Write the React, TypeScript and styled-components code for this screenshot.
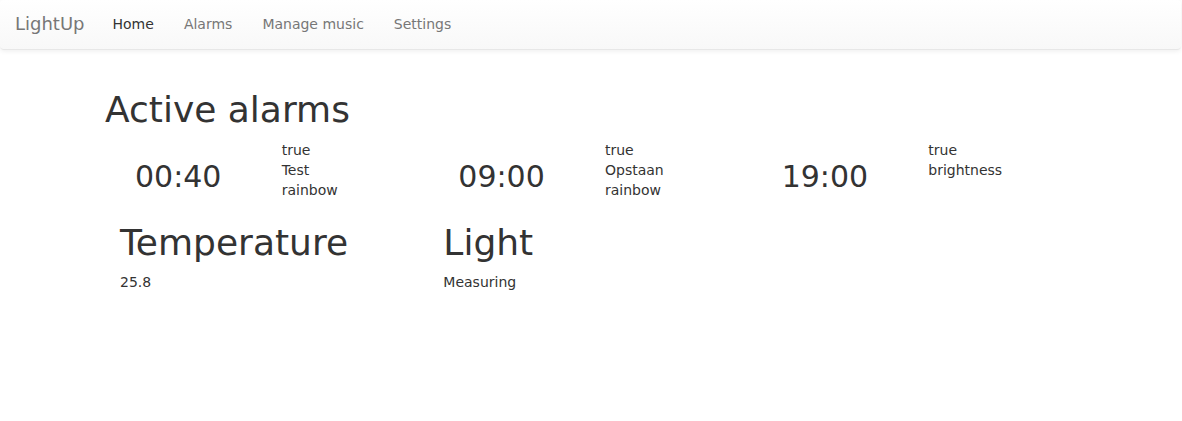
import React from "react";
import styled, { createGlobalStyle } from "styled-components";

const Global = createGlobalStyle`
  * { box-sizing: border-box; }
  html, body { margin: 0; padding: 0; background: #fff; }
  body {
    font-family: "DejaVu Sans", "Liberation Sans", sans-serif;
    font-size: 14px;
    line-height: 1.42857143;
    color: #333;
  }
`;

const Navbar = styled.nav`
  display: flex;
  align-items: stretch;
  height: 50px;
  margin: 0 1px 20px 0;
  background-image: linear-gradient(to bottom, #fff 0, #f8f8f8 100%);
  border: 1px solid #e7e7e7;
  border-width: 0 0 1px 0;
  border-radius: 4px;
  box-shadow: inset 0 1px 0 rgba(255, 255, 255, 0.15), 0 1px 5px rgba(0, 0, 0, 0.075);
`;

const Brand = styled.a`
  display: block;
  padding: 14px 13px 0 15px;
  font-size: 18px;
  line-height: 20px;
  color: #777;
  text-decoration: none;
  text-shadow: 0 1px 0 rgba(255, 255, 255, 0.25);
`;

const NavList = styled.ul`
  display: flex;
  list-style: none;
  margin: 0;
  padding: 0;
`;

const NavLink = styled.a<{ $active?: boolean }>`
  display: block;
  padding: 14px 15px 0 15px;
  line-height: 20px;
  color: ${(p) => (p.$active ? "#333" : "#777")};
  text-decoration: none;
`;

const Container = styled.div`
  display: flow-root;
  width: 972px;
  margin: 0 auto;
  padding: 0 17px 0 15px;
`;

const Row = styled.div`
  display: flex;
  flex-wrap: wrap;
  margin: 0 -15px;
`;

const Col = styled.div<{ $span: number }>`
  width: ${(p) => (p.$span / 12) * 100}%;
  padding: 0 15px;
`;

const H1 = styled.h1`
  font-size: 36px;
  font-weight: 500;
  line-height: 1.1;
  margin: 20px 0 10px;
`;

const PageTitle = styled(H1)`
  margin-left: -15px;
`;

const Time = styled.h2`
  font-size: 30px;
  font-weight: 500;
  line-height: 1.1;
  margin: 20px 0 10px;
  padding-left: 15px;
`;

const Lines = styled.div`
  display: flex;
  flex-direction: column;
`;

const P = styled.p`
  margin: 0 0 10px;
`;

const alarms = [
  { time: "00:40", lines: ["true", "Test", "rainbow"] },
  { time: "09:00", lines: ["true", "Opstaan", "rainbow"] },
  { time: "19:00", lines: ["true", "brightness"] },
];

export default function App() {
  return (
    <>
      <Global />
      <Navbar>
        <Brand href="#">LightUp</Brand>
        <NavList>
          <li><NavLink href="#" $active>Home</NavLink></li>
          <li><NavLink href="#">Alarms</NavLink></li>
          <li><NavLink href="#">Manage music</NavLink></li>
          <li><NavLink href="#">Settings</NavLink></li>
        </NavList>
      </Navbar>
      <Container>
        <PageTitle>Active alarms</PageTitle>
        <Row>
          {alarms.map((a) => (
            <Col $span={4} key={a.time}>
              <Row>
                <Col $span={6}>
                  <Time>{a.time}</Time>
                </Col>
                <Col $span={6}>
                  <Lines>
                    {a.lines.map((l, i) => (
                      <span key={i}>{l}</span>
                    ))}
                  </Lines>
                </Col>
              </Row>
            </Col>
          ))}
        </Row>
        <Row>
          <Col $span={4}>
            <H1>Temperature</H1>
            <P>25.8</P>
          </Col>
          <Col $span={4}>
            <H1>Light</H1>
            <P>Measuring</P>
          </Col>
        </Row>
      </Container>
    </>
  );
}
